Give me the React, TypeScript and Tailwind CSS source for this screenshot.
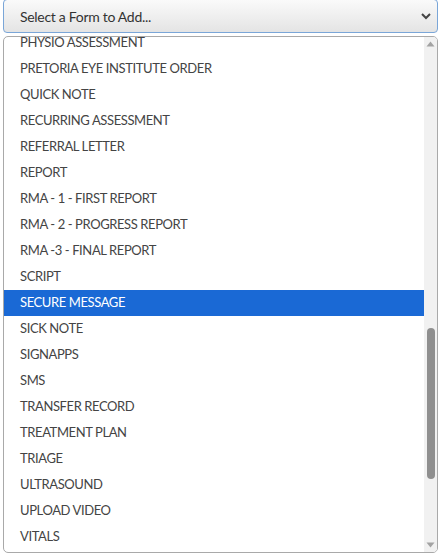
import React from "react";

const items = [
  "PHYSIO ASSESSMENT",
  "PRETORIA EYE INSTITUTE ORDER",
  "QUICK NOTE",
  "RECURRING ASSESSMENT",
  "REFERRAL LETTER",
  "REPORT",
  "RMA - 1 - FIRST REPORT",
  "RMA - 2 - PROGRESS REPORT",
  "RMA -3 - FINAL REPORT",
  "SCRIPT",
  "SECURE MESSAGE",
  "SICK NOTE",
  "SIGNAPPS",
  "SMS",
  "TRANSFER RECORD",
  "TREATMENT PLAN",
  "TRIAGE",
  "ULTRASOUND",
  "UPLOAD VIDEO",
  "VITALS",
];

export default function App() {
  return (
    <div
      className="w-[441px] h-[558px] bg-white overflow-hidden flex flex-col px-[3px] pb-[5px] gap-[3px]"
      style={{ fontFamily: '"Source Sans Pro", Lato, "Liberation Sans", sans-serif' }}
    >
      <div className="h-[34px] shrink-0 rounded-[4px] border border-[#7aa6d8] bg-gradient-to-b from-[#fafafa] to-[#e4e4e4] flex items-center justify-between pl-[16px] pr-[4px] -mt-[1px]">
        <span className="text-[14px] text-[#333] tracking-[-0.3px]">Select a Form to Add...</span>
        <svg width="12" height="8" viewBox="0 0 12 8" className="mr-[1px]">
          <path d="M2 2 L6 6 L10 2" stroke="#444" strokeWidth="2" fill="none" />
        </svg>
      </div>
      <div className="flex-1 rounded-[5px] border border-[#a9a9a9] bg-white flex overflow-hidden">
        <div className="flex-1 overflow-hidden">
          <div className="-mt-[7px] flex flex-col">
            {items.map((it) => {
              const sel = it === "SECURE MESSAGE";
              return (
                <div
                  key={it}
                  className={
                    sel
                      ? "h-[26px] shrink-0 flex items-center pl-[16px] text-[13px] tracking-[-0.4px] bg-[#1a69d5] text-white"
                      : "h-[26px] shrink-0 flex items-center pl-[16px] text-[13px] tracking-[-0.4px] text-[#444]"
                  }
                >
                  {it}
                </div>
              );
            })}
          </div>
        </div>
        <div className="w-[13px] bg-[#f1f1f1] flex flex-col items-center">
          <svg width="9" height="6" viewBox="0 0 9 6" className="mt-[4px]">
            <path d="M0.5 5.5 L4.5 0.5 L8.5 5.5 Z" fill="#a3a3a3" />
          </svg>
          <div className="w-[8px] h-[151px] mt-[281px] rounded-[4px] bg-[#8f8f8f]" />
          <div className="flex-1" />
          <svg width="9" height="6" viewBox="0 0 9 6" className="mb-[4px]">
            <path d="M0.5 0.5 L4.5 5.5 L8.5 0.5 Z" fill="#a3a3a3" />
          </svg>
        </div>
      </div>
    </div>
  );
}
